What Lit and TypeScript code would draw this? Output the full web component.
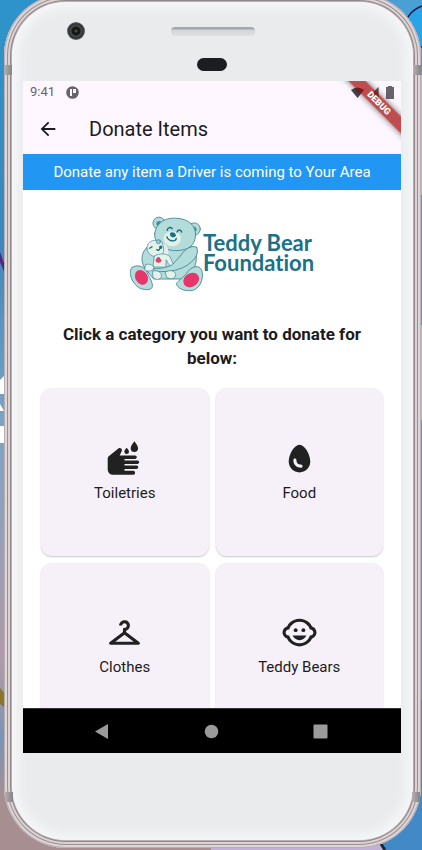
import { LitElement, html, css, svg } from "lit";
import { customElement, property } from "lit/decorators.js";

const toiletriesIcon = svg`<svg viewBox="0 0 24 24" aria-hidden="true">
  <path d="M1.100 12.200c0-.8.3-1.300.9-1.800L8.200 5.300c.9-.6 2.600.4 2.100 1.600L8.900 10.100h10c1.400 0 1.400 2.200 0 2.200H12v1h8.400c1.500 0 1.500 2.200 0 2.200H12v1.100h7.800c1.500 0 1.500 2.200 0 2.200H12v1.200h5.800c1.400 0 1.400 2.600 0 2.600H5C2.500 22.600 1.100 21.200 1.100 18.800z"/>
  <path d="M13.400 5c-.8 1-1.500 1.800-1.500 2.600a1.500 1.500 0 0 0 3 0c0-.8-.7-1.600-1.500-2.600zM18.400 .8c-1.300 1.700-2.400 3.200-2.400 4.600a2.400 2.400 0 0 0 4.800 0c0-1.400-1.100-2.900-2.400-4.600z"/>
</svg>`;
const foodIcon = svg`<svg viewBox="0 0 24 24" aria-hidden="true">
  <path d="M12 3C8.500 3 5 9.330 5 14c0 3.870 3.130 7 7 7s7-3.130 7-7c0-4.670-3.500-11-7-11zm1 15c-3 0-5-1.990-5-5 0-.55.45-1 1-1s1 .45 1 1c0 2.920 2.420 3 3 3 .55 0 1 .45 1 1s-.45 1-1 1z"/>
</svg>`;
const clothesIcon = svg`<svg viewBox="0 0 24 24" aria-hidden="true">
  <path d="M21.600 18.200 13 11.750v-.91c1.650-.49 2.800-2.170 2.430-4.050-.26-1.310-1.300-2.400-2.610-2.700C10.540 3.570 8.500 5.300 8.500 7.500h2c0-.83.67-1.500 1.500-1.500s1.500.67 1.500 1.500c0 .84-.69 1.520-1.530 1.500-.54-.01-.97.45-.97.99v1.760L2.400 18.200c-.77.58-.36 1.800.6 1.800h18c.96 0 1.370-1.220.6-1.800zM6 18l6-4.500 6 4.500H6z"/>
</svg>`;
const bearsIcon = svg`<svg viewBox="0 0 24 24" aria-hidden="true">
  <circle cx="14.500" cy="10.500" r="1.250"/><circle cx="9.500" cy="10.500" r="1.250"/>
  <path d="M22.940 12.660c.04-.21.06-.43.06-.66s-.02-.45-.06-.66c-.25-1.510-1.360-2.740-2.810-3.170-.53-1.120-1.280-2.100-2.190-2.910C16.360 3.850 14.280 3 12 3s-4.360.85-5.940 2.260c-.92.81-1.670 1.800-2.190 2.910-1.450.43-2.560 1.650-2.810 3.170-.04.21-.06.43-.06.66s.02.45.06.66c.25 1.510 1.360 2.740 2.810 3.170.52 1.110 1.270 2.090 2.170 2.890C7.620 20.140 9.710 21 12 21s4.380-.86 5.970-2.280c.9-.8 1.650-1.790 2.170-2.890 1.440-.43 2.550-1.650 2.800-3.170zM19 14c-.1 0-.19-.02-.29-.03-.2.67-.49 1.290-.86 1.860C16.600 17.740 14.450 19 12 19s-4.600-1.260-5.850-3.170c-.37-.57-.66-1.190-.86-1.860-.1.010-.19.030-.29.030-1.100 0-2-.9-2-2s.9-2 2-2c.1 0 .19.020.29.030.2-.67.49-1.290.86-1.860C7.400 6.260 9.550 5 12 5s4.600 1.260 5.850 3.170c.37.57.66 1.190.86 1.860.1-.01.19-.03.29-.03 1.100 0 2 .9 2 2s-.9 2-2 2z"/>
  <path d="M7.500 14c.76 1.770 2.490 3 4.500 3s3.740-1.230 4.500-3h-9z"/>
</svg>`;

const bear = svg`<svg viewBox="0 0 216 222" aria-hidden="true" stroke="#3f8798" stroke-width="2.600" stroke-linecap="round" stroke-linejoin="round">
  <g fill="#b3dcda">
    <circle cx="86" cy="20" r="18"/><circle cx="190" cy="37" r="18"/>
    <circle cx="86" cy="21" r="8" fill="#3f929d" stroke="none"/><circle cx="189" cy="38" r="8" fill="#3f929d" stroke="none"/>
    <path d="M55 87C30 105 30 138 48 158L70 185h90l28-28c14-30 10-60-8-72z"/>
    <path d="M73 50C79 14 108 4 135 5c38 1 60 22 59 50-1 30-21 46-58 46-38 0-66-22-63-51z"/>
    <path d="M197 91c8 15-3 34-15 43-20 19-51 30-91 29-15-1-25-5-25-9 15 1 38-1 58-10l25-27c15-24 36-33 48-26z"/>
    <path d="M6 151c16-11 38-3 45 15 7 16 17 29 15 42-2 9-14 10-28 7C14 212-11 168 6 151z"/>
    <path d="M166 170c12-21 35-29 45-14 10 23-2 56-26 63-26 3-44-6-48-20z"/>
  </g>
  <g fill="#e3efe7" stroke="none"><ellipse cx="125" cy="66" rx="26" ry="22"/><ellipse cx="91" cy="104" rx="23" ry="25"/></g>
  <g fill="#e6f1e9" stroke-width="2">
    <path d="M50 96c-1-18 14-27 28-25 4-4 19-1 17 10 9 13 4 30-4 35-12 8-37 2-41-20z"/>
    <circle cx="84" cy="75" r="6" fill="#9ccbd0"/>
    <path d="M73 116c15-7 36-8 46 4l8 20c-4 8-12 5-15-3l-5-9-1 22-37-1z"/>
    <path d="M47 142c12-3 24 2 23 12-1 8-22 11-26 3z"/>
    <path d="M68 161c15-2 26 4 25 16-2 11-20 13-25 1z"/>
    <path d="M105 164c14-7 29-4 30 8 0 12-14 16-26 8z"/>
  </g>
  <path d="M79 124c4-8 11-3 10 1 6 2 6 10-4 12-10 0-12-10-6-13z" fill="#e43e6e" stroke="none"/>
  <g fill="#e6356b" stroke="none"><ellipse cx="34" cy="180" rx="18" ry="23" transform="rotate(-30 34 180)"/><ellipse cx="181" cy="188" rx="25" ry="20" transform="rotate(-35 181 188)"/></g>
  <g fill="none" stroke="#176f83" stroke-width="4">
    <path d="M110 41c1-9 10-11 15-5M139 46c3-8 12-8 14 0M109 60c5 14 26 16 28 5M58 94l7-4M79 98c5 4 8 1 9-3"/>
    <path d="M120 51c4-5 14-1 14 5-4 6-14 5-14-5z" fill="#176f83"/><circle cx="91" cy="91" r="3" fill="#176f83"/>
  </g>
</svg>`;

@customElement("category-card")
class CategoryCard extends LitElement {
  @property() label = "";
  @property({ attribute: false }) icon: unknown;
  static styles = css`
    :host { display: block; }
    .card {
      width: 100%; aspect-ratio: 1; border: 0; padding: 0 0 2px; border-radius: 11px;
      display: flex; flex-direction: column; align-items: center; justify-content: center; gap: 7px;
      background: #f6f1f9; color: #1d1b20; box-shadow: 0 1px 2px #00000038;
      font: 15px/18px Roboto, sans-serif;
    }
    .card svg { display: block; width: 37px; height: 37px; fill: #212121; }
  `;
  render() {
    return html`<button class="card" type="button">${this.icon}<span>${this.label}</span></button>`;
  }
}

@customElement("app-root")
class AppRoot extends LitElement {
  static styles = css`
    * { box-sizing: border-box; }
    :host { display: block; height: 100vh; min-height: 600px; font-family: Roboto, sans-serif; color: #1d1b20; }
    .desk {
      display: flex; position: relative; height: 100%; overflow: hidden; padding: 0 1px 2px 4px;
      background: linear-gradient(#2d94cb, #3c86ba 28%, #7da4c4 50%, #b09aa8 78%, #7894b5 87%, #a78f91 94%);
    }
    .wall { position: absolute; top: 0; right: 0; width: 50%; height: 100%; }
    .edge { position: absolute; left: 0; top: 0; width: 5px; height: 100%; }
    .shell {
      position: relative; flex: 1; min-width: 0; margin-top: -6px; padding: 8px; border-radius: 62px;
      background: #e9ebec;
      box-shadow: inset 0 0 0 1px #b9aeb1, inset 0 0 0 3px #ded5d7, inset 0 0 0 4px #9a9093, inset 0 0 0 6px #dbd2d4, inset 0 0 0 7px #918789, inset 0 0 0 9px #b9b0b4;
    }
    .band { position: absolute; width: 8px; height: 10px; background: linear-gradient(90deg, #b5afb1, #888386); }
    .band.tl { left: 0; top: 71px; } .band.tr { right: 0; top: 71px; }
    .band.bl { left: 1px; bottom: 46px; } .band.br { right: 1px; bottom: 46px; }
    .face {
      position: relative; height: 100%; display: flex; flex-direction: column; padding: 0 12px 0 11px; border-radius: 54px;
      background: #e9ebec; box-shadow: inset 0 0 14px 4px #f9fafb;
    }
    .forehead { height: 79px; flex: none; position: relative; }
    .camera { position: absolute; left: 44px; top: 20px; width: 18px; height: 18px; border-radius: 50%; background: radial-gradient(circle, #4b4b20 0 1px, #14171a 2px 4px, #43474a 5px 6px, #292d30 7px, #686b6e 9px); }
    .speaker { position: absolute; left: 50%; top: 25px; width: 84px; height: 9px; margin-left: -41px; border-radius: 4px; background: linear-gradient(#a4a7ae 0 2px, #d3d6d9 3px, #dfe1e3); }
    .sensor { position: absolute; left: 50%; top: 56px; width: 30px; height: 13px; margin-left: -15px; border-radius: 7px; background: #1b1d20; }
    .screen { flex: 1; min-height: 0; display: flex; flex-direction: column; background: #fff; position: relative; overflow: hidden; }
    .status { height: 22px; flex: none; display: flex; align-items: center; gap: 11px; padding: 0 5px 0 7px; background: #fef7ff; color: #68636b; font-size: 13px; line-height: 16px; }
    .status svg { width: 13px; height: 13px; display: block; }
    .signals { margin-left: auto; display: flex; gap: 3px; }
    .appbar { height: 51px; flex: none; display: flex; align-items: center; gap: 29px; padding: 0 14px; background: #fef7ff; }
    .back { border: 0; padding: 0; width: 23px; height: 22px; background: none; }
    .back svg { display: block; width: 22px; height: 22px; fill: #1d1b20; }
    h1 { margin: 0; font-size: 20px; line-height: 26px; font-weight: 400; }
    .banner { flex: none; margin: 0; padding: 8px; background: #2196f3; color: #fff; text-align: center; font-size: 15px; line-height: 20px; }
    .content { flex: 1; min-height: 0; overflow: hidden; padding: 26px 18px 0; }
    .logo { display: flex; justify-content: center; align-items: center; padding-left: 20px; color: #1b7186; font: bold 22px/20px Lato, sans-serif; font-variant-ligatures: none; }
    .logo span { padding-bottom: 2px; }
    .logo svg { width: 73px; height: 76px; flex: none; display: block; }
    h2 { margin: 30px 0 18px; padding: 0 16px; text-align: center; font-size: 17px; line-height: 24px; font-weight: 700; }
    .grid { display: grid; grid-template-columns: 1fr 1fr; gap: 7px; }
    .nav { height: 45px; flex: none; display: flex; justify-content: space-between; align-items: center; padding: 0 73px 0 71px; background: #000; border-top: 1px solid #333; }
    .nav button { border: 0; padding: 0; background: none; }
    .nav svg { width: 15px; height: 15px; display: block; fill: #9b9b9b; }
    .corner { position: absolute; right: 0; top: 0; width: 64px; height: 64px; overflow: hidden; }
    .ribbon { position: absolute; right: -24px; top: 16px; width: 92px; height: 12px; transform: rotate(45deg); background: #a00000b0; color: #fff; text-align: center; font-size: 9px; line-height: 12px; font-weight: 900; box-shadow: 0 0 6px #0009; }
    .chin { height: 87px; flex: none; }
  `;
  private categories = [
    { label: "Toiletries", icon: toiletriesIcon },
    { label: "Food", icon: foodIcon },
    { label: "Clothes", icon: clothesIcon },
    { label: "Teddy Bears", icon: bearsIcon },
  ];
  render() {
    return html`<div class="desk">
      <svg class="edge" viewBox="0 0 5 850" preserveAspectRatio="none" aria-hidden="true">
        <path d="M0 252l5 14v8l-5-12z" fill="#4b287e"/>
        <path d="M0 380l4-4v18H0zM0 404l4 7H0zM0 426h4v17H0z" fill="#fff"/>
        <path d="M0 688l5 6v14l-5-4z" fill="#8a7428"/>
      </svg>
      <svg class="wall" viewBox="0 0 211 850" preserveAspectRatio="none" aria-hidden="true">
        <path d="M100 0h111v850H100z" fill="#4a9fd4"/>
        <path d="M211 6c-22 8-26 38 0 41" fill="#2aa4e8" stroke="#10194a" stroke-width="1.500"/>
        <path d="M208 75h3v120h-3zM208 325h3v95h-3z" fill="#b9b9c0"/>
        <path d="M150 700h61v150h-40z" fill="#4189c7"/>
        <path d="M0 840h165l10 10H0z" fill="#c2b1d5"/><path d="M162 832l12 18" stroke="#142b3b" stroke-width="3"/>
      </svg>
      <div class="shell">
        <div class="face">
          <div class="forehead"><i class="camera"></i><i class="speaker"></i><i class="sensor"></i></div>
          <main class="screen">
            <div class="status"><span>9:41</span>
              <svg viewBox="0 0 13 13" aria-hidden="true"><circle cx="6.500" cy="6.500" r="6.300" fill="#68636b"/><path d="M4 3h2v7H4zM7 3h3v4H7z" fill="#fef7ff"/></svg>
              <div class="signals">
                <svg viewBox="0 0 13 13" aria-hidden="true"><path d="M0 4Q6.500-1 13 4L6.500 12z" fill="#4a474d"/></svg>
                <svg viewBox="0 0 13 13" aria-hidden="true"><path d="M11.500 1v11H1z" fill="#9a939c"/><path d="M11.500 1v11H6V6.500z" fill="#5f5b62"/></svg>
                <svg viewBox="0 0 13 13" aria-hidden="true"><path d="M5 1V0h4v1h2v12H3V1z" fill="#68636b"/></svg>
              </div>
            </div>
            <header class="appbar">
              <button class="back" type="button" aria-label="Back"><svg viewBox="0 0 24 24"><path d="M20 11H7.830l5.590-5.590L12 4l-8 8 8 8 1.410-1.410L7.830 13H20z"/></svg></button>
              <h1>Donate Items</h1>
            </header>
            <p class="banner">Donate any item a Driver is coming to Your Area</p>
            <section class="content">
              <div class="logo">${bear}<span>Teddy Bear<br>Foundation</span></div>
              <h2>Click a category you want to donate for below:</h2>
              <div class="grid">${this.categories.map((c) => html`<category-card .label=${c.label} .icon=${c.icon}></category-card>`)}</div>
            </section>
            <nav class="nav">
              <button type="button" aria-label="Back"><svg viewBox="0 0 15 15"><path d="M14 0v15L1 7.500z"/></svg></button>
              <button type="button" aria-label="Home"><svg viewBox="0 0 15 15"><circle cx="7.500" cy="7.500" r="6.800"/></svg></button>
              <button type="button" aria-label="Recent apps"><svg viewBox="0 0 15 15"><rect x=".5" y=".5" width="14" height="14" rx="1"/></svg></button>
            </nav>
            <div class="corner"><span class="ribbon">DEBUG</span></div>
          </main>
          <div class="chin"></div>
        </div>
        <i class="band tl"></i><i class="band tr"></i><i class="band bl"></i><i class="band br"></i>
      </div>
    </div>`;
  }
}
